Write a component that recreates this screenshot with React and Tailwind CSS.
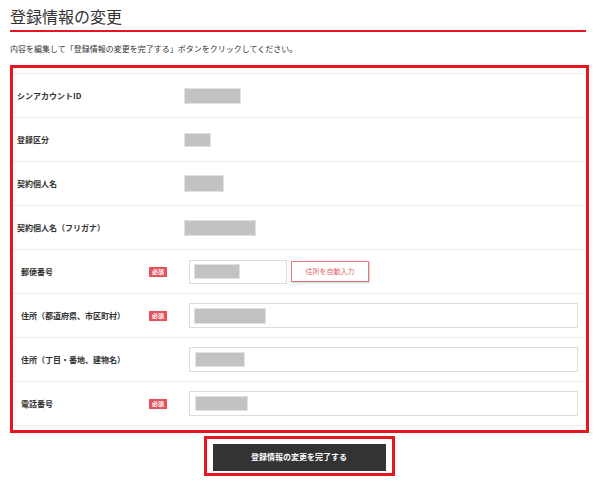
export default function App() {
  const display = [
    { label: "シンアカウントID", w: "w-[55px]", h: "h-[14px]" },
    { label: "登録区分", w: "w-[25px]", h: "h-[12px]" },
    { label: "契約個人名", w: "w-[38px]", h: "h-[15px]" },
    { label: "契約個人名（フリガナ）", w: "w-[70px]", h: "h-[14px]" },
  ];

  const Gray = ({ w, h }) => (
    <div className={`${w} ${h} bg-[#c2c2c2] outline outline-1 outline-[#e2e2e2]`}></div>
  );

  const Badge = ({ show }) => (
    <div className="w-[18px] mr-[22px]">
      {show && (
        <div className="w-[18px] h-[10px] bg-[#e8505a] text-white text-[6px] leading-[10px] font-bold text-center">
          必須
        </div>
      )}
    </div>
  );

  return (
    <div
      className="w-[600px] h-[484px] bg-white px-[10px] text-[#333]"
      style={{ fontFamily: '"Noto Sans CJK JP", "Noto Sans", sans-serif' }}
    >
      {/* Title */}
      <div className="w-[576px] pt-[6px] pb-[4px] border-b-2 border-[#e8141e]">
        <h1 className="text-[16px] leading-[20px] font-normal">登録情報の変更</h1>
      </div>

      <p className="mt-[11px] text-[8px] leading-[12px]">
        内容を編集して「登録情報の変更を完了する」ボタンをクリックしてください。
      </p>

      {/* Form box */}
      <div className="mt-[10px] w-[579px] border-[3px] border-[#e8141e] pt-[5px] pb-[4px]">
        <div className="border-t border-[#eeeeee]">
          {display.map((row) => (
            <div key={row.label} className="h-[44px] flex items-center border-b border-[#eeeeee]">
              <div className="w-[172px] pl-[4px] text-[8px] font-bold">{row.label}</div>
              <Gray w={row.w} h={row.h} />
            </div>
          ))}

          {/* 郵便番号 */}
          <div className="h-[44px] flex items-center border-b border-[#eeeeee]">
            <div className="w-[136px] pl-[8px] text-[8px] font-bold">郵便番号</div>
            <Badge show />
            <div className="w-[98px] h-[24px] border border-[#dddddd] flex items-center pl-[5px]">
              <Gray w="w-[44px]" h="h-[13px]" />
            </div>
            <button className="ml-[4px] w-[78px] h-[21px] border border-[#e9787c] text-[#e0646a] text-[7px] leading-none shadow-[1px_1px_1px_rgba(0,0,0,0.15)] bg-white">
              住所を自動入力
            </button>
          </div>

          {/* 住所1 */}
          <div className="h-[44px] flex items-center border-b border-[#eeeeee]">
            <div className="w-[136px] pl-[8px] text-[8px] font-bold">住所（都道府県、市区町村）</div>
            <Badge show />
            <div className="w-[389px] h-[25px] border border-[#dddddd] flex items-center pl-[5px]">
              <Gray w="w-[70px]" h="h-[14px]" />
            </div>
          </div>

          {/* 住所2 */}
          <div className="h-[44px] flex items-center border-b border-[#eeeeee]">
            <div className="w-[136px] pl-[8px] text-[8px] font-bold">住所（丁目・番地、建物名）</div>
            <Badge show={false} />
            <div className="w-[389px] h-[25px] border border-[#dddddd] flex items-center pl-[6px]">
              <Gray w="w-[48px]" h="h-[13px]" />
            </div>
          </div>

          {/* 電話番号 */}
          <div className="h-[44px] flex items-center border-b border-[#eeeeee]">
            <div className="w-[136px] pl-[8px] text-[8px] font-bold">電話番号</div>
            <Badge show />
            <div className="w-[389px] h-[25px] border border-[#dddddd] flex items-center pl-[6px]">
              <Gray w="w-[51px]" h="h-[13px]" />
            </div>
          </div>
        </div>
      </div>

      {/* Submit */}
      <div className="flex justify-center mt-[3px] pr-[2px]">
        <div className="border-[3px] border-[#e8141e] px-[6px] py-[2px]">
          <button className="w-[173px] h-[27px] bg-[#333333] text-white text-[8px] font-bold">
            登録情報の変更を完了する
          </button>
        </div>
      </div>
    </div>
  );
}
